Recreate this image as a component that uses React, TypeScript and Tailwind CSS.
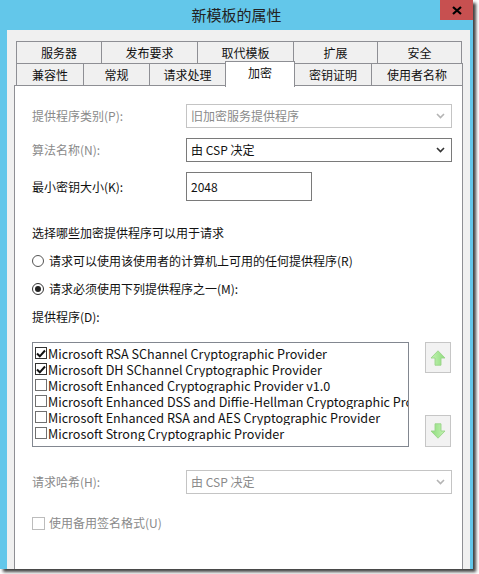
import React from "react";

const row1 = [
  { label: "服务器", w: "w-[86px]" },
  { label: "发布要求", w: "w-[97px]" },
  { label: "取代模板", w: "w-[97px]" },
  { label: "扩展", w: "w-[85px]" },
  { label: "安全", w: "w-[85px]" },
];

const row2Left = [
  { label: "兼容性", w: "w-[68px]" },
  { label: "常规", w: "w-[67px]" },
  { label: "请求处理", w: "w-[77px]" },
];

const row2Right = [
  { label: "密钥证明", w: "w-[78px]" },
  { label: "使用者名称", w: "w-[92px]" },
];

const providers = [
  { name: "Microsoft RSA SChannel Cryptographic Provider", checked: true },
  { name: "Microsoft DH SChannel Cryptographic Provider", checked: true },
  { name: "Microsoft Enhanced Cryptographic Provider v1.0", checked: false },
  { name: "Microsoft Enhanced DSS and Diffie-Hellman Cryptographic Provider", checked: false },
  { name: "Microsoft Enhanced RSA and AES Cryptographic Provider", checked: false },
  { name: "Microsoft Strong Cryptographic Provider", checked: false },
];

const Chevron = ({ disabled }: { disabled?: boolean }) => (
  <svg width="9" height="6" viewBox="0 0 9 6">
    <path d="M1 1 L4.5 4.5 L8 1" fill="none" stroke={disabled ? "#b4b4b4" : "#333"} strokeWidth="1.6" />
  </svg>
);

const Select = ({ value, disabled }: { value: string; disabled?: boolean }) => (
  <div
    className={
      "h-[24px] flex items-center justify-between pl-[4px] pr-[6px] bg-white border " +
      (disabled ? "border-[#c4c4c4] text-[#8a8a8a]" : "border-[#7a7a7a] text-[#111]")
    }
  >
    <span>{value}</span>
    <Chevron disabled={disabled} />
  </div>
);

const Arrow = ({ down }: { down?: boolean }) => (
  <svg width="16" height="16" viewBox="0 0 16 16" className={down ? "rotate-180" : ""}>
    <defs>
      <linearGradient id={down ? "gd" : "gu"} x1="0" y1="0" x2="1" y2="0">
        <stop offset="0" stopColor="#c4f3b4" />
        <stop offset="1" stopColor="#8edc7c" />
      </linearGradient>
    </defs>
    <path
      d="M8 0.8 L15 8 L11 8 L11 15.2 L5 15.2 L5 8 L1 8 Z"
      fill={`url(#${down ? "gd" : "gu"})`}
      stroke="#9bd48a"
      strokeWidth="0.9"
      strokeLinejoin="round"
    />
  </svg>
);

const Tab = ({ label, w }: { label: string; w: string }) => (
  <div className={`${w} h-[22px] -ml-px first:ml-0 border border-b-0 border-[#8e8f94] bg-[#f0f0f0] flex items-center justify-center`}>
    {label}
  </div>
);

const App = () => {
  return (
    <div className="w-[479px] h-[574px] bg-white font-[family-name:'Noto_Sans_CJK_SC',sans-serif] text-[12px] text-[#111]">
      <div className="w-[473px] h-[569px] bg-[#63c7ea] flex flex-col shadow-[3px_3px_3px_rgba(0,0,0,0.75)]">
        <div className="h-[30px] flex items-start shrink-0">
          <div className="w-[33px]" />
          <div className="flex-1 h-[30px] flex items-center justify-center text-[15px] text-[#222]">
            新模板的属性
          </div>
          <div className="w-[33px] h-[20px] bg-[#c75050] flex items-center justify-center">
            <svg width="10" height="9" viewBox="0 0 10 9">
              <path d="M1 1 L9 8 M9 1 L1 8" stroke="#000" strokeWidth="2.2" />
            </svg>
          </div>
        </div>
        <div className="ml-[7px] mr-[3px] flex-1 bg-[#f0f0f0] pt-[11px] pl-[7px] pr-[7px] flex flex-col">
          <div className="pl-[2px] flex">
            {row1.map((t) => (
              <Tab key={t.label} {...t} />
            ))}
          </div>
          <div className="pl-[2px] flex items-end h-[22px]">
            {row2Left.map((t) => (
              <Tab key={t.label} {...t} />
            ))}
            <div className="relative z-10 w-[70px] h-[26px] -ml-px -mb-[2px] border border-b-0 border-[#8e8f94] bg-white flex items-start justify-center pt-[2px]">
              加密
            </div>
            {row2Right.map((t) => (
              <Tab key={t.label} {...t} />
            ))}
          </div>
          <div className="flex-1 bg-white border border-b-0 border-[#8e8f94] pl-[17px] pr-[10px] pt-[18px]">
            <div className="grid grid-cols-[154px_1fr] gap-y-[10px] items-center">
              <div className="text-[#8a8a8a]">提供程序类别(P):</div>
              <Select value="旧加密服务提供程序" disabled />
              <div className="text-[#8a8a8a]">算法名称(N):</div>
              <Select value="由 CSP 决定" />
              <div>最小密钥大小(K):</div>
              <div className="w-[126px] h-[29px] border border-[#7a7a7a] bg-white flex items-center pl-[4px]">2048</div>
            </div>
            <div className="mt-[23px] h-[18px] flex items-center">选择哪些加密提供程序可以用于请求</div>
            <div className="mt-[10px] h-[18px] flex items-center gap-[5px]">
              <span className="w-[12px] h-[12px] rounded-full border border-[#555] bg-white" />
              请求可以使用该使用者的计算机上可用的任何提供程序(R)
            </div>
            <div className="mt-[10px] h-[18px] flex items-center gap-[5px]">
              <span className="w-[12px] h-[12px] rounded-full border border-[#333] bg-white flex items-center justify-center">
                <span className="w-[6px] h-[6px] rounded-full bg-[#222]" />
              </span>
              请求必须使用下列提供程序之一(M):
            </div>
            <div className="mt-[10px] h-[18px] flex items-center">提供程序(D):</div>
            <div className="mt-[16px] flex">
              <div className="w-[377px] h-[105px] border border-[#828790] bg-white pt-[2px] pl-[2px] overflow-hidden">
                {providers.map((p) => (
                  <div key={p.name} className="h-[16px] flex items-center whitespace-nowrap overflow-hidden">
                    <span
                      className={
                        "w-[12px] h-[12px] shrink-0 border bg-white flex items-center justify-center " +
                        (p.checked ? "border-[#333]" : "border-[#707070]")
                      }
                    >
                      {p.checked && (
                        <svg width="10" height="9" viewBox="0 0 10 9">
                          <path d="M1 4.5 L3.8 7.3 L9 1.5" fill="none" stroke="#111" strokeWidth="2" />
                        </svg>
                      )}
                    </span>
                    <span className="ml-[1px] text-[12.6px] leading-[15px]">{p.name}</span>
                  </div>
                ))}
              </div>
              <div className="ml-[16px] flex flex-col justify-between">
                <div className="w-[26px] h-[31px] border border-[#c6c6c6] bg-[#f2f2f2] flex items-center justify-center">
                  <Arrow />
                </div>
                <div className="w-[26px] h-[32px] border border-[#c6c6c6] bg-[#f2f2f2] flex items-center justify-center">
                  <Arrow down />
                </div>
              </div>
            </div>
            <div className="mt-[23px] grid grid-cols-[154px_1fr] items-center">
              <div className="text-[#8a8a8a]">请求哈希(H):</div>
              <Select value="由 CSP 决定" disabled />
            </div>
            <div className="mt-[20px] h-[18px] flex items-center gap-[4px] text-[#8a8a8a]">
              <span className="w-[13px] h-[13px] border border-[#bcbcbc] bg-white" />
              使用备用签名格式(U)
            </div>
          </div>
        </div>
      </div>
    </div>
  );
};

export default App;
